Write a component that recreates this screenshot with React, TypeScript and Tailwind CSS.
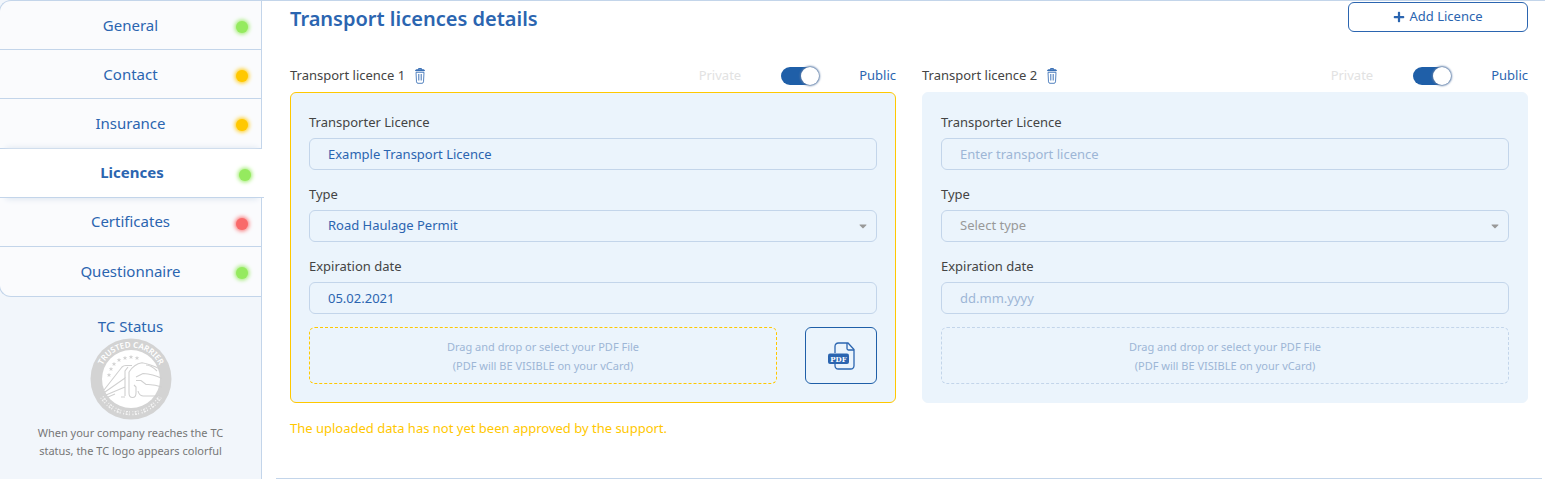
import { useState } from "react";
import { FaPlus, FaCaretDown } from "react-icons/fa";

type Status = "green" | "yellow" | "red";

const tabs: { label: string; status: Status }[] = [
  { label: "General", status: "green" },
  { label: "Contact", status: "yellow" },
  { label: "Insurance", status: "yellow" },
  { label: "Licences", status: "green" },
  { label: "Certificates", status: "red" },
  { label: "Questionnaire", status: "green" },
];

const dotStyles: Record<Status, string> = {
  green: "bg-[#95ea5f] shadow-[0_0_4px_1px_#95ea5f]",
  yellow: "bg-[#ffc800] shadow-[0_0_4px_1px_#ffc800]",
  red: "bg-[#f96a6a] shadow-[0_0_4px_1px_#f96a6a]",
};

const fieldStyles =
  "block h-8 w-full appearance-none rounded-md border border-[#c3d5ea] bg-transparent px-[18px] text-[13px] outline-none placeholder:text-[#9db6d6]";

const stars = [
  [19, 37],
  [21, 31],
  [24, 26],
  [29, 22],
  [35, 20],
  [41, 19],
  [47, 20],
];

function TrashIcon() {
  return (
    <svg width="10" height="16" viewBox="0 0 10 16" fill="none" stroke="#2b65b0">
      <path d="M0.5 2.7q0-1 1-1h7q1 0 1 1z" fill="#2b65b0" strokeWidth="0.8" />
      <path d="M3.5 1.5V0.6h3v0.9" />
      <path d="M1 4.300l0.500 9.500q0.200 1.500 1.500 1.500h4q1.300 0 1.500-1.500L9 4.300z" strokeWidth="0.8" />
      <path d="M3.8 6v6.500M6.200 6v6.500" strokeWidth="0.9" />
    </svg>
  );
}

function PdfIcon() {
  return (
    <svg width="28" height="28" viewBox="0 0 28 28" fill="none" stroke="#2b65b0" strokeWidth="1.3">
      <path d="M8 11V4.500Q8 1 11.500 1H21l6 6.500V23.500Q27 27 23.500 27h-12Q8 27 8 23.500V22" />
      <path d="M20 1v5.500q0 1.500 1.500 1.500H27" />
      <rect x="1" y="11.500" width="21" height="10.500" rx="2" fill="#2b65b0" stroke="none" />
      <text
        x="11.5"
        y="19.5"
        textAnchor="middle"
        fill="#fff"
        stroke="none"
        className="font-['DejaVu_Serif',serif] text-[7px] font-bold"
      >
        PDF
      </text>
    </svg>
  );
}

function TrustedCarrierLogo() {
  return (
    <svg width="82" height="82" viewBox="0 0 82 82" fill="none" className="mx-auto">
      <defs>
        <path id="seal-top" d="M9.500 41a31.500 31.500 0 0 1 63 0" />
      </defs>
      <circle cx="41" cy="41" r="40.500" fill="#d3d3d3" />
      <circle cx="41" cy="41" r="29" fill="#fff" />
      <text fill="#fff" className="font-['Noto_Sans',sans-serif] text-[8px] font-semibold">
        <textPath href="#seal-top" startOffset="50%" textAnchor="middle">
          TRUSTED CARRIER
        </textPath>
      </text>
      {/* Worn lettering on the lower rim */}
      <path d="M12 59a34 34 0 0 0 58 0" stroke="#f4f4f4" strokeWidth="4" strokeDasharray="1 1.500 2 1 1 2.500" />
      <path d="M11 58a35 35 0 0 0 60 0" stroke="#d3d3d3" strokeWidth="1.500" strokeDasharray="3 1.500" />
      {stars.map(([x, y]) => (
        <path
          key={x}
          d="M0-2.300l0.600 1.600h1.700l-1.300 1 0.500 1.700L0 1.100l-1.500 0.900 0.500-1.700-1.300-1h1.700z"
          transform={`translate(${x} ${y})`}
          fill="#d3d3d3"
        />
      ))}
      {/* Truck, T and C strokes */}
      <g stroke="#d0d0d0" strokeWidth="1.1">
        <path d="M14 52L32 29q1.500-1.500 4-1.500h6" />
        <path d="M15 54l20-14v18M16 57l19-8M18 59l7-3M31 59h4" />
        <path d="M35 40V33l3-4" />
        <path d="M39 34v21q0 4.500 3.500 4.500t3.500-4.500v-6l-2-2" />
        <path d="M39 34q5-8 13-9.300Q60 26 70 31" />
        <path d="M46 39l7-3.500q10 0.500 19 5" />
        <path d="M46 42.500h5l5 4q8-0.500 16 2.500" />
        <path d="M48 53q1 4.500 5 5h17" />
        <path d="M56 27q5 0 11 6" />
      </g>
    </svg>
  );
}

function LicenceCard({
  index,
  licence = "",
  type = "",
  date = "",
  pending = false,
}: {
  index: number;
  licence?: string;
  type?: string;
  date?: string;
  pending?: boolean;
}) {
  const [isPublic, setIsPublic] = useState(true);

  return (
    <section>
      {/* Heading row */}
      <div className="flex h-8 items-center text-[13px] text-[#444]">
        <h2>Transport licence {index}</h2>
        <button type="button" aria-label="Delete licence" className="ml-2.5 cursor-pointer">
          <TrashIcon />
        </button>
        <label htmlFor={`public-${index}`} className="ml-auto text-[#e2e2e2]">
          Private
        </label>
        <input
          id={`public-${index}`}
          type="checkbox"
          role="switch"
          checked={isPublic}
          onChange={(e) => setIsPublic(e.target.checked)}
          className="mx-10 h-[18px] w-[38px] cursor-pointer appearance-none rounded-full bg-[#c3d5ea] before:block before:size-[18px] before:rounded-full before:bg-white before:shadow-[0_0_2px_1px_#5f7ea8] checked:bg-[#1f5fa8] checked:before:translate-x-5"
        />
        <label htmlFor={`public-${index}`} className="text-[#2b65b0]">
          Public
        </label>
      </div>

      <div
        className={`rounded-md border bg-[#ebf4fc] px-[18px] pt-[17px] pb-[18px] text-[13px] text-[#444] ${
          pending ? "border-[#ffc800]" : "border-[#ebf4fc]"
        }`}
      >
        <div className="mb-[13px] flex flex-col gap-3">
          <div>
            <label htmlFor={`licence-${index}`} className="mb-1 block leading-6">
              Transporter Licence
            </label>
            <input
              id={`licence-${index}`}
              defaultValue={licence}
              placeholder="Enter transport licence"
              className={`${fieldStyles} text-[#2b65b0]`}
            />
          </div>
          <div>
            <label htmlFor={`type-${index}`} className="mb-1 block leading-6">
              Type
            </label>
            <div className="relative">
              <select
                id={`type-${index}`}
                defaultValue={type}
                className={`${fieldStyles} ${type ? "text-[#2b65b0]" : "text-[#999]"}`}
              >
                <option value="">Select type</option>
                <option value="road">Road Haulage Permit</option>
              </select>
              <FaCaretDown className="pointer-events-none absolute top-2.5 right-2 size-3 text-[#999]" />
            </div>
          </div>
          <div>
            <label htmlFor={`date-${index}`} className="mb-1 block leading-6">
              Expiration date
            </label>
            <input
              id={`date-${index}`}
              defaultValue={date}
              placeholder="dd.mm.yyyy"
              className={`${fieldStyles} text-[#2b65b0]`}
            />
          </div>
        </div>
        <div className="flex gap-7">
          <button
            type="button"
            className={`h-[57px] flex-1 cursor-pointer rounded-md border border-dashed text-[11px] leading-[19px] text-[#9db6d6] ${
              pending ? "border-[#ffc800]" : "border-[#c3d5ea]"
            }`}
          >
            Drag and drop or select your PDF File
            <br />
            (PDF will BE VISIBLE on your vCard)
          </button>
          {pending && (
            <button
              type="button"
              aria-label="Open PDF"
              className="flex w-18 cursor-pointer items-center justify-center rounded-md border border-[#1f5fa8]"
            >
              <PdfIcon />
            </button>
          )}
        </div>
      </div>

      {pending && (
        <p className="mt-[13px] text-[13px] leading-6 text-[#ffc800]">
          The uploaded data has not yet been approved by the support.
        </p>
      )}
    </section>
  );
}

export default function App() {
  const [active, setActive] = useState("Licences");

  return (
    <div className="flex min-h-screen bg-[#f2f6fb] font-['Noto_Sans',sans-serif]">
      {/* Sidebar */}
      <aside className="w-[262px] shrink-0 border-r border-[#c3d5ea] text-center">
        <nav className="-ml-px grid h-[297px] grid-rows-6 rounded-l-xl border-t border-b border-l border-[#c3d5ea] bg-[#fafbfd]">
          {tabs.map((tab) => (
            <button
              key={tab.label}
              type="button"
              onClick={() => setActive(tab.label)}
              className={`relative cursor-pointer border-b border-[#c3d5ea] text-[15px] text-[#2b65b0] last:border-b-0 ${
                tab.label === active
                  ? "z-10 -mr-[3px] bg-white font-bold shadow-[0_7px_6px_-6px_#dbe4f0,0_-7px_6px_-6px_#dbe4f0]"
                  : ""
              }`}
            >
              {tab.label}
              <span className={`absolute top-5 right-[13px] size-3 rounded-full ${dotStyles[tab.status]}`} />
            </button>
          ))}
        </nav>
        <h2 className="mt-[17px] text-[15px] leading-6 text-[#2b65b0]">TC Status</h2>
        <TrustedCarrierLogo />
        <p className="mx-auto mt-1 w-[210px] text-[11px] leading-[18px] text-[#777]">
          When your company reaches the TC status, the TC logo appears colorful
        </p>
      </aside>

      {/* Licences */}
      <main className="flex-1 border-t border-[#c3d5ea] bg-white pr-[17px] pl-7">
        <div className="flex h-[59px] items-start justify-between">
          <h1 className="mt-1 text-[20px] leading-7 font-semibold text-[#2b65b0]">Transport licences details</h1>
          <button
            type="button"
            className="mt-px flex h-[30px] w-[180px] cursor-pointer items-center justify-center gap-1 rounded-md border border-[#2b65b0] text-[13px] text-[#2b65b0]"
          >
            <FaPlus className="size-3" />
            Add Licence
          </button>
        </div>
        <div className="grid grid-cols-2 gap-[26px]">
          <LicenceCard index={1} licence="Example Transport Licence" type="road" date="05.02.2021" pending />
          <LicenceCard index={2} />
        </div>
        <hr className="-mx-3.5 mt-[38px] border-[#c3d5ea]" />
      </main>
    </div>
  );
}
